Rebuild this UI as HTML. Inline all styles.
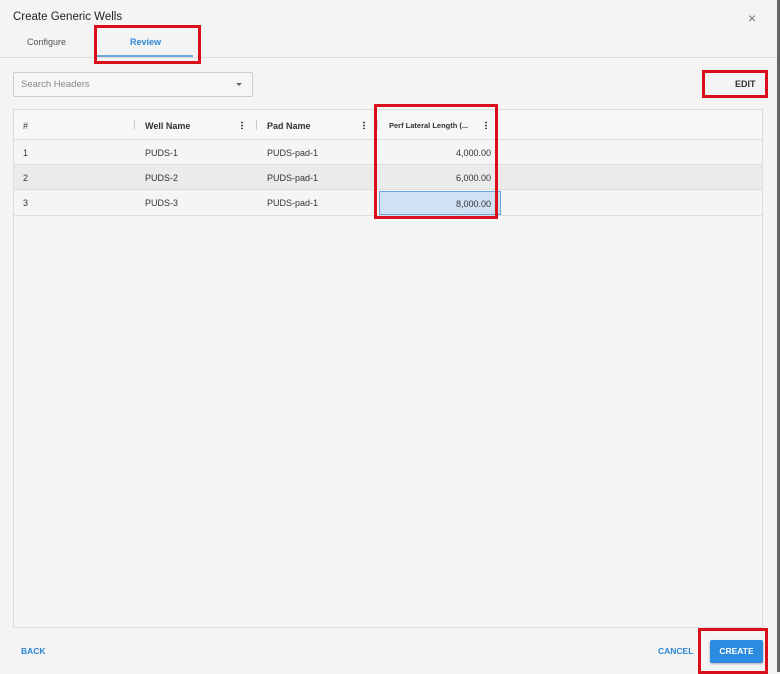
<!DOCTYPE html>
<html><head><style>
*{margin:0;padding:0;box-sizing:border-box}
body{width:780px;height:672px;background:#f4f4f4;font-family:"Liberation Sans",sans-serif;position:relative;overflow:hidden;color:#333}
.a{position:absolute}
.red{position:absolute;border:3px solid #d9101b}
.h{font-size:8px;color:#555;font-weight:bold}
.sep{position:absolute;width:1px;height:10px;background:#ccc;top:10px}
.keb{position:absolute;top:11px;width:2px;height:8px;background:
 radial-gradient(circle,#444 0.9px,transparent 1px) 0 0/2px 3px repeat-y}
.row{position:absolute;left:0;right:0;height:25px;border-bottom:1px solid #ddd}
.row span{position:absolute;top:8px;font-size:9px;color:#333}
.num{position:absolute;width:100px;text-align:right;font-size:9px;color:#333}
</style></head><body>
<div class="a" style="right:0;top:0;width:3px;height:672px;background:#666"></div>
<div class="a" style="left:13px;top:11px;font-size:11.5px;color:#222">Create Generic Wells</div>
<div class="a" style="left:748px;top:10px;font-size:14px;color:#777">×</div>
<div class="a" style="left:27px;top:37px;font-size:9px;color:#555">Configure</div>
<div class="a" style="left:130px;top:37px;font-size:9px;color:#2d87d4;font-weight:bold">Review</div>
<div class="a" style="left:96px;top:55px;width:97px;height:2px;background:#6ea8dc"></div>
<div class="a" style="left:0;top:57px;width:777px;height:1px;background:#ddd"></div>
<div class="red" style="left:94px;top:25px;width:107px;height:39px"></div>

<div class="a" style="left:13px;top:72px;width:240px;height:25px;border:1px solid #ccc;border-radius:2px;background:#f6f6f6"></div>
<div class="a" style="left:21px;top:79px;font-size:9.5px;color:#888">Search Headers</div>
<div class="a" style="left:236px;top:83px;width:0;height:0;border-left:3px solid transparent;border-right:3px solid transparent;border-top:3px solid #666"></div>

<div class="a" style="left:735px;top:79px;font-size:9px;font-weight:bold;color:#333">EDIT</div>
<div class="red" style="left:702px;top:70px;width:66px;height:28px"></div>

<div class="a" style="left:13px;top:109px;width:750px;height:519px;border:1px solid #ddd;background:#f5f5f5">
 <div class="row" style="top:0;height:30px;background:#f7f7f7">
  <span class="h" style="left:9px;top:11px;font-weight:normal">#</span>
  <div class="sep" style="left:120px"></div>
  <span class="h" style="left:131px;top:11px">Well Name</span>
  <div class="keb" style="left:227px"></div>
  <div class="sep" style="left:242px"></div>
  <span class="h" style="left:253px;top:11px">Pad Name</span>
  <div class="keb" style="left:349px"></div>
  <div class="sep" style="left:363px"></div>
  <span class="h" style="left:375px;top:11px;font-size:7.5px">Perf Lateral Length (...</span>
  <div class="keb" style="left:471px"></div>
 </div>
 <div class="row" style="top:30px"><span style="left:9px">1</span><span style="left:131px">PUDS-1</span><span style="left:253px">PUDS-pad-1</span></div>
 <div class="row" style="top:55px;background:#ebebeb"><span style="left:9px">2</span><span style="left:131px">PUDS-2</span><span style="left:253px">PUDS-pad-1</span></div>
 <div class="row" style="top:80px;height:26px"><span style="left:9px">3</span><span style="left:131px">PUDS-3</span><span style="left:253px">PUDS-pad-1</span></div>
 <div class="a" style="left:365px;top:81px;width:122px;height:24px;background:#cfe1f3;border:1px solid #6aa6de"></div>
 <div class="num" style="left:377px;top:38px">4,000.00</div>
 <div class="num" style="left:377px;top:63px">6,000.00</div>
 <div class="num" style="left:377px;top:89px">8,000.00</div>
</div>
<div class="red" style="left:374px;top:104px;width:124px;height:115px"></div>

<div class="a" style="left:21px;top:646px;font-size:8.5px;font-weight:bold;color:#2d87d4">BACK</div>
<div class="a" style="left:658px;top:646px;font-size:8.5px;font-weight:bold;color:#2d87d4">CANCEL</div>
<div class="a" style="left:710px;top:640px;width:53px;height:23px;background:#2b8be0;border-radius:2px;box-shadow:0 1px 2px rgba(0,0,0,.3);color:#fff;font-size:8.5px;font-weight:bold;text-align:center;line-height:23px">CREATE</div>
<div class="red" style="left:698px;top:628px;width:70px;height:46px"></div>
</body></html>
